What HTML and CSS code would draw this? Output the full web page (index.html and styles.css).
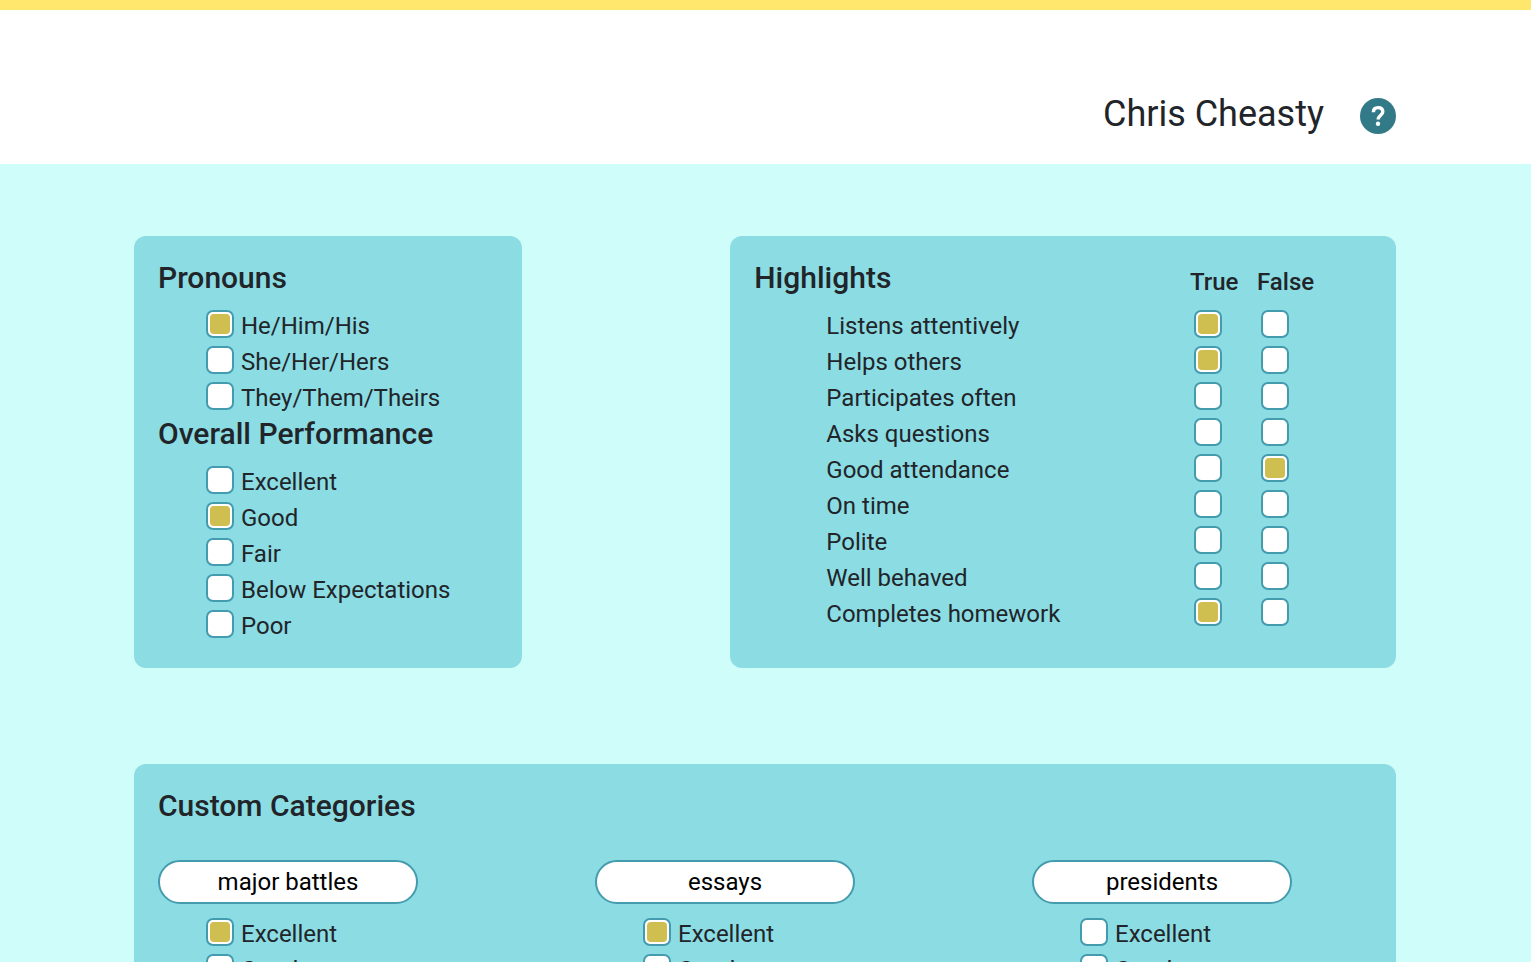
FILE: index.html
```html
<!DOCTYPE html>
<html lang="en">
<head>
<meta charset="utf-8">
<title>Chris Cheasty</title>
<link rel="stylesheet" href="styles.css">
</head>
<body>
<header class="header">
  <h1 class="student">Chris Cheasty</h1>
  <button class="help" type="button" aria-label="Help">
    <svg viewBox="0 0 36 36" fill="none" aria-hidden="true">
      <circle cx="18" cy="18" r="18" fill="#327a88"/>
      <path d="M13.400 14.200c0-3 2-4.600 4.700-4.600 2.800 0 4.700 1.600 4.700 4.200 0 3.500-4.600 3.400-4.600 7.600" stroke="#fff" stroke-width="3.400"/>
      <circle cx="18" cy="25.800" r="2.200" fill="#fff"/>
    </svg>
  </button>
</header>
<main class="main">
  <div class="top">
    <section class="card">
      <h2 class="heading">Pronouns</h2>
      <ul class="options">
        <li><label class="option"><input class="box" type="checkbox" checked>He/Him/His</label></li>
        <li><label class="option"><input class="box" type="checkbox">She/Her/Hers</label></li>
        <li><label class="option"><input class="box" type="checkbox">They/Them/Theirs</label></li>
      </ul>
      <h2 class="heading">Overall Performance</h2>
      <ul class="options">
        <li><label class="option"><input class="box" type="checkbox">Excellent</label></li>
        <li><label class="option"><input class="box" type="checkbox" checked>Good</label></li>
        <li><label class="option"><input class="box" type="checkbox">Fair</label></li>
        <li><label class="option"><input class="box" type="checkbox">Below Expectations</label></li>
        <li><label class="option"><input class="box" type="checkbox">Poor</label></li>
      </ul>
    </section>
    <section class="card">
      <table class="highlights">
        <thead>
          <tr><th scope="col"><h2 class="heading">Highlights</h2></th><th class="col-true" scope="col" id="t">True</th><th class="col-false" scope="col" id="f">False</th></tr>
        </thead>
        <tbody>
          <tr><th scope="row" id="h1">Listens attentively</th><td><input class="box" type="checkbox" aria-labelledby="h1 t" checked></td><td><input class="box" type="checkbox" aria-labelledby="h1 f"></td></tr>
          <tr><th scope="row" id="h2">Helps others</th><td><input class="box" type="checkbox" aria-labelledby="h2 t" checked></td><td><input class="box" type="checkbox" aria-labelledby="h2 f"></td></tr>
          <tr><th scope="row" id="h3">Participates often</th><td><input class="box" type="checkbox" aria-labelledby="h3 t"></td><td><input class="box" type="checkbox" aria-labelledby="h3 f"></td></tr>
          <tr><th scope="row" id="h4">Asks questions</th><td><input class="box" type="checkbox" aria-labelledby="h4 t"></td><td><input class="box" type="checkbox" aria-labelledby="h4 f"></td></tr>
          <tr><th scope="row" id="h5">Good attendance</th><td><input class="box" type="checkbox" aria-labelledby="h5 t"></td><td><input class="box" type="checkbox" aria-labelledby="h5 f" checked></td></tr>
          <tr><th scope="row" id="h6">On time</th><td><input class="box" type="checkbox" aria-labelledby="h6 t"></td><td><input class="box" type="checkbox" aria-labelledby="h6 f"></td></tr>
          <tr><th scope="row" id="h7">Polite</th><td><input class="box" type="checkbox" aria-labelledby="h7 t"></td><td><input class="box" type="checkbox" aria-labelledby="h7 f"></td></tr>
          <tr><th scope="row" id="h8">Well behaved</th><td><input class="box" type="checkbox" aria-labelledby="h8 t"></td><td><input class="box" type="checkbox" aria-labelledby="h8 f"></td></tr>
          <tr><th scope="row" id="h9">Completes homework</th><td><input class="box" type="checkbox" aria-labelledby="h9 t" checked></td><td><input class="box" type="checkbox" aria-labelledby="h9 f"></td></tr>
        </tbody>
      </table>
    </section>
  </div>
  <section class="card">
    <h2 class="heading">Custom Categories</h2>
    <div class="categories">
      <div>
        <input class="category" type="text" value="major battles" aria-label="First category">
        <ul class="options">
          <li><label class="option"><input class="box" type="checkbox" checked>Excellent</label></li>
          <li><label class="option"><input class="box" type="checkbox">Good</label></li>
        </ul>
      </div>
      <div>
        <input class="category" type="text" value="essays" aria-label="Second category">
        <ul class="options">
          <li><label class="option"><input class="box" type="checkbox" checked>Excellent</label></li>
          <li><label class="option"><input class="box" type="checkbox">Good</label></li>
        </ul>
      </div>
      <div>
        <input class="category" type="text" value="presidents" aria-label="Third category">
        <ul class="options">
          <li><label class="option"><input class="box" type="checkbox">Excellent</label></li>
          <li><label class="option"><input class="box" type="checkbox">Good</label></li>
        </ul>
      </div>
    </div>
  </section>
</main>
</body>
</html>
```
FILE: styles.css
```css
*, *::before { box-sizing: border-box; }
html { scrollbar-width: none; }
body {
  margin: 0;
  border-top: 10px solid #ffe66d;
  background: #cffdf9;
  color: #212529;
  font: 400 24px/36px Roboto, sans-serif;
}
.header {
  display: flex;
  justify-content: flex-end;
  align-items: center;
  gap: 36px;
  padding: 80px 135px 26px 134px;
  background: #fff;
}
.student { margin: 0; font-size: 36px; font-weight: 400; line-height: 48px; }
.help { width: 36px; height: 36px; margin: 4px 0 0; padding: 0; border: 0; background: none; }
.help svg { display: block; width: 100%; }
.main {
  display: flex;
  flex-direction: column;
  gap: 96px;
  padding: 72px 135px 72px 134px;
}
.top { display: grid; grid-template-columns: 7fr 12fr; gap: 208px; }
.card { padding: 24px; border-radius: 12px; background: #8cdce4; }
.heading { margin: 0; font-size: 30px; font-weight: 500; line-height: 36px; }
.options { margin: 12px 0 0; padding: 0 0 0 48px; list-style: none; }
.option { display: flex; align-items: flex-start; gap: 7px; white-space: nowrap; }
.box {
  appearance: none;
  display: block;
  flex: none;
  width: 28px;
  height: 28px;
  margin: 2px 0 0;
  padding: 2px;
  border: 2px solid #459bae;
  border-radius: 7px;
  background: #fff;
}
.box:checked::before {
  content: "";
  display: block;
  height: 100%;
  border-radius: 4px;
  background: #cfbe50;
}
.highlights { width: 100%; border-collapse: collapse; table-layout: fixed; }
.highlights th, .highlights td { height: 36px; padding: 0; text-align: left; vertical-align: top; }
.highlights thead th { padding-bottom: 8px; font-weight: 500; }
.highlights thead .col-true { width: 67px; padding-top: 4px; }
.highlights thead .col-false { width: 115px; padding-top: 4px; }
.highlights tbody th { padding-left: 72px; font-weight: 400; }
.highlights tbody td { padding-left: 4px; }
.categories {
  display: grid;
  grid-template-columns: repeat(3, 1fr);
  gap: 97px;
  margin-top: 36px;
}
.category {
  display: block;
  width: 260px;
  max-width: 100%;
  height: 44px;
  padding: 0 12px;
  border: 2px solid #459bae;
  border-radius: 22px;
  background: #fff;
  color: #000;
  font: inherit;
  text-align: center;
}
```
